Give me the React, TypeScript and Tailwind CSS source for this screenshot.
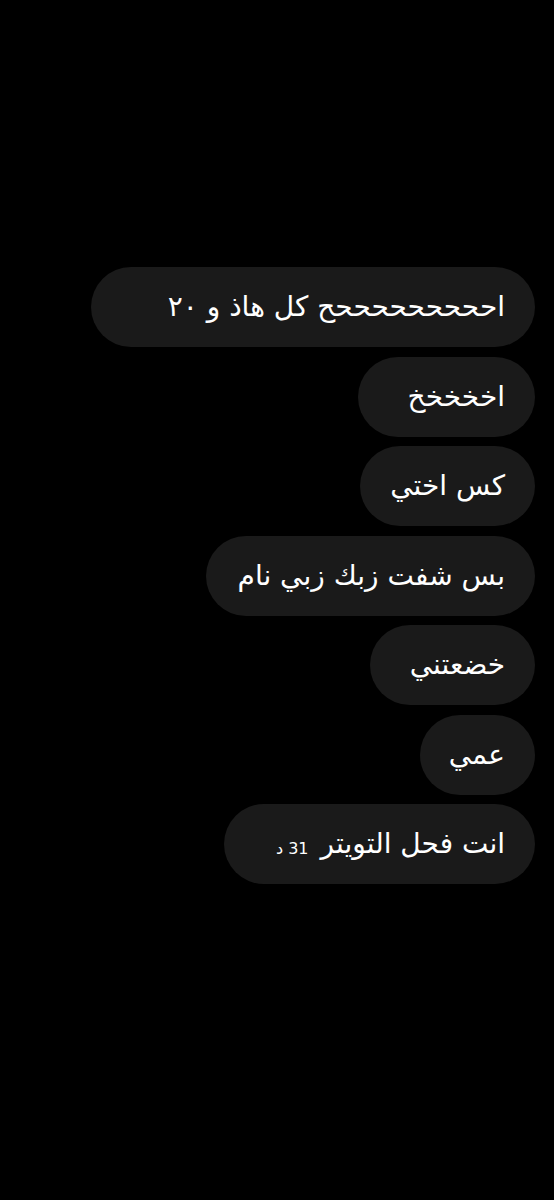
const messages = [
  { text: 'احححححححححح كل هاذ و ٢٠', w: 'w-[444px]' },
  { text: 'اخخخخخ', w: 'w-[177px]' },
  { text: 'كس اختي', w: 'w-[175px]' },
  { text: 'بس شفت زبك زبي نام', w: 'w-[329px]' },
  { text: 'خضعتني', w: 'w-[165px]' },
  { text: 'عمي', w: 'w-[115px]' },
];

const Bubble = ({ w, children }: { w: string; children: React.ReactNode }) => (
  <div className={`${w} h-[80px] rounded-[40px] bg-[#1a1a1a] pr-[30px] pl-[20px] flex items-center text-white text-[28px] leading-none whitespace-nowrap`}>
    {children}
  </div>
);

export default function App() {
  return (
    <div
      dir="rtl"
      className="w-[554px] h-[1200px] bg-black overflow-hidden"
      style={{ fontFamily: '"DejaVu Sans", "Noto Sans", sans-serif' }}
    >
      <div className="pt-[267px] pr-[19px] flex flex-col items-start gap-[9.5px]">
        {messages.map((m, i) => (
          <Bubble key={i} w={m.w}>{m.text}</Bubble>
        ))}
        <Bubble w="w-[311px]">
          <span>انت فحل التويتر</span>
          <span className="mr-[12px] mt-[10px] text-[16px] text-white">31 د</span>
        </Bubble>
      </div>
    </div>
  );
}
